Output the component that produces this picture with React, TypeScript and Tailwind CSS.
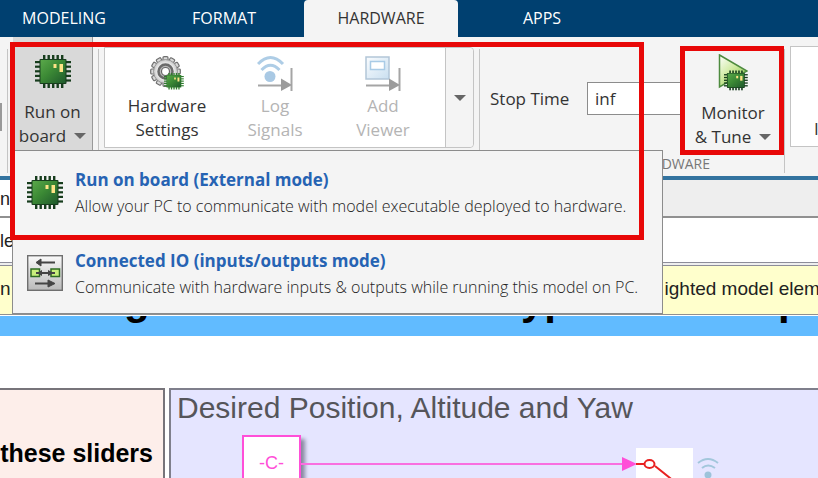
import type { ReactNode } from "react";
import clsx from "clsx";

const tabs = [
  { name: "MODELING", width: "mr-4 w-32" },
  { name: "FORMAT", width: "w-40" },
  { name: "HARDWARE", width: "w-[154px]" },
  { name: "APPS", width: "w-42" },
];

const pins = [0, 1, 2, 3, 4];

function ChipShape({ id, pin = "#173d1d" }: { id: string; pin?: string }) {
  return (
    <>
      <defs>
        <linearGradient id={id} x1="0" y1="0" x2="1" y2="1">
          <stop offset="0" stopColor="#5aa84a" />
          <stop offset="0.45" stopColor="#3c8a35" />
          <stop offset="1" stopColor="#1f5a2c" />
        </linearGradient>
      </defs>
      {pins.map((i) => (
        <g key={i} fill={pin}>
          <rect x={8 + i * 4.5} y="0" width="2.4" height="33" />
          <rect x="0" y={6 + i * 4.6} width="36" height="2.2" />
        </g>
      ))}
      <rect x="4.5" y="4" width="27" height="25" rx="1" fill={pin} />
      <rect x="5.5" y="5" width="25" height="23" fill={`url(#${id})`} />
      <rect x="18.5" y="9" width="3" height="4" fill="#ffe487" />
      <rect x="24.5" y="9" width="3.5" height="8" fill="#ffe487" />
    </>
  );
}

function ChipIcon({ id }: { id: string }) {
  return (
    <svg width="36" height="33" viewBox="0 0 36 33" aria-hidden="true">
      <ChipShape id={id} />
    </svg>
  );
}

function GearChipIcon() {
  const teeth = [0, 30, 60, 90, 120, 150, 180, 210, 240, 270, 300, 330];
  return (
    <svg width="34" height="34" viewBox="0 0 34 34" aria-hidden="true">
      <defs>
        <radialGradient id="gear">
          <stop offset="0.3" stopColor="#8a8a8a" />
          <stop offset="0.65" stopColor="#f0f0f0" />
          <stop offset="1" stopColor="#c5c5c5" />
        </radialGradient>
      </defs>
      {teeth.map((a) => (
        <rect
          key={a}
          x="13"
          y="0.7"
          width="5"
          height="5"
          rx="1"
          fill="#dadada"
          stroke="#707070"
          strokeWidth="1.2"
          transform={`rotate(${a} 15.5 15.5)`}
        />
      ))}
      <circle cx="15.5" cy="15.5" r="12" fill="url(#gear)" stroke="#888" strokeWidth="0.8" />
      <circle cx="15.5" cy="15.5" r="7" fill="#b9b9b9" stroke="#6a6a6a" strokeWidth="2.5" />
      <circle cx="15.5" cy="15.5" r="4" fill="#fff" stroke="#666" strokeWidth="1.2" />
      <g transform="translate(14 17) scale(0.55 0.5)">
        <ChipShape id="gearChip" pin="#2f7d2c" />
      </g>
    </svg>
  );
}

function LogIcon() {
  return (
    <svg width="36" height="36" viewBox="0 0 36 36" fill="none" aria-hidden="true">
      <path d="M1 8Q13.5 -5 26 8M4.500 14Q13.500 4.500 22.500 14" stroke="#aecde6" strokeWidth="3" />
      <circle cx="13" cy="20.500" r="5.500" fill="#a9c9e4" />
      <path d="M1 29.500H26M34.500 12V35" stroke="#a5a5a5" strokeWidth="2" />
      <path d="M24 22.500L35 29L24 35Z" fill="#9c9c9c" />
    </svg>
  );
}

function ViewerIcon() {
  return (
    <svg width="36" height="36" viewBox="0 0 36 36" fill="none" aria-hidden="true">
      <defs>
        <linearGradient id="screen" x1="0" y1="0" x2="1" y2="1">
          <stop offset="0" stopColor="#fafcfe" />
          <stop offset="1" stopColor="#c9dff0" />
        </linearGradient>
      </defs>
      <rect x="1" y="1" width="23" height="22" fill="url(#screen)" stroke="#b2c6d8" strokeWidth="1.500" />
      <rect x="5.500" y="5.500" width="14" height="8" fill="#fff" stroke="#a9cbe6" strokeWidth="1.500" />
      <path d="M1 29.500H26M34.500 12V35" stroke="#a5a5a5" strokeWidth="2" />
      <path d="M24 22.500L35 29L24 35Z" fill="#9c9c9c" />
    </svg>
  );
}

function MonitorIcon() {
  return (
    <svg width="30" height="37" viewBox="0 0 30 37" aria-hidden="true">
      <defs>
        <linearGradient id="play" x1="0" y1="0" x2="0.8" y2="1">
          <stop offset="0" stopColor="#ffffff" />
          <stop offset="0.5" stopColor="#cfeaa0" />
          <stop offset="1" stopColor="#7cc043" />
        </linearGradient>
      </defs>
      <path d="M1.500 1L29 17L1.500 33Z" fill="url(#play)" stroke="#4e8b3f" strokeWidth="1.500" />
      <g transform="translate(6 16.500) scale(0.660 0.600)">
        <ChipShape id="monitorChip" />
      </g>
    </svg>
  );
}

function ConnectedIcon() {
  return (
    <svg width="36" height="36" viewBox="0 0 36 36" aria-hidden="true">
      <defs>
        <linearGradient id="io" x1="0" y1="0" x2="0" y2="1">
          <stop offset="0" stopColor="#fafafa" />
          <stop offset="1" stopColor="#b9b9b9" />
        </linearGradient>
      </defs>
      <rect x="0.700" y="0.700" width="34.600" height="34.600" fill="url(#io)" stroke="#6f6f6f" strokeWidth="1.400" />
      <g stroke="#444" strokeWidth="1.800" fill="#444">
        <path d="M13 7.500H28M8 28.500H22" />
        <path d="M14 4L9 7.500L14 11ZM21 25L28 28.500L21 32Z" strokeWidth="1" />
      </g>
      <g fill="#c8ee7c" stroke="#2e6b22" strokeWidth="1.500">
        <rect x="4" y="14" width="8.500" height="7.500" />
        <rect x="24" y="14" width="8.500" height="7.500" />
      </g>
      <path d="M9 18H28" stroke="#444" strokeWidth="2" />
      <path d="M15 15L10 18L15 21ZM21 15L27 18L21 21Z" fill="#444" />
    </svg>
  );
}

function Caret() {
  return (
    <svg width="12" height="6" viewBox="0 0 12 6" aria-hidden="true">
      <path d="M0 0H12L6 6Z" fill="#666" />
    </svg>
  );
}

function Separator() {
  return <div className="mt-3 h-31 w-px shrink-0 bg-[#c4c4c4]" />;
}

function GalleryItem({ icon, top, bottom, disabled }: { icon: ReactNode; top: string; bottom: string; disabled?: boolean }) {
  return (
    <button
      type="button"
      disabled={disabled}
      className={clsx("flex w-27 flex-col items-center pt-2", disabled ? "text-[#b4b4b4]" : "text-[#333]")}
    >
      <span className="flex h-9 items-start justify-center">{icon}</span>
      <span className="pt-0.5 text-[17px] leading-6">
        {top}
        <br />
        {bottom}
      </span>
    </button>
  );
}

function MenuItem({ icon, title, text }: { icon: ReactNode; title: string; text: string }) {
  return (
    <button type="button" className="flex h-[81px] w-full items-start gap-3 pt-[15px] pl-3.5 text-left">
      <span className="flex h-13 items-center">{icon}</span>
      <span className="whitespace-nowrap">
        <span className="block text-[17px] leading-[27px] font-bold text-[#2663b3]">{title}</span>
        <span className="block text-[16px] leading-[27px] font-light text-[#222]">{text}</span>
      </span>
    </button>
  );
}

function Ribbon() {
  return (
    <div className="relative flex h-[139px] bg-[#f4f4f4]">
      <div className="mt-[66px] h-7 w-0.5 shrink-0 bg-[#999]" />
      <div className="w-[5px] shrink-0" />
      <Separator />
      <button
        type="button"
        className="ml-[5px] h-[113px] w-20 shrink-0 border-r border-[#999] bg-[#d9d9d9] pt-4 text-[17px] leading-6 text-[#333]"
      >
        <span className="flex justify-center pb-3">
          <ChipIcon id="runChip" />
        </span>
        Run on
        <br />
        <span className="flex items-center justify-center gap-2">
          board <Caret />
        </span>
      </button>
      <div className="w-[5px] shrink-0" />
      <Separator />
      <div className="mt-2.5 ml-[5px] flex h-[101px] shrink-0 rounded-r border border-[#c4c4c4] bg-white pl-2">
        <GalleryItem icon={<GearChipIcon />} top="Hardware" bottom="Settings" />
        <GalleryItem icon={<LogIcon />} top="Log" bottom="Signals" disabled />
        <GalleryItem icon={<ViewerIcon />} top="Add" bottom="Viewer" disabled />
        <button
          type="button"
          aria-label="More"
          className="ml-2 flex w-7 items-center justify-center rounded-r border-l border-[#c4c4c4] bg-[#f4f4f4]"
        >
          <Caret />
        </button>
      </div>
      <div className="w-[5px] shrink-0" />
      <Separator />
      <div className="flex w-[304px] shrink-0 flex-col">
        <div className="flex h-[116px]">
          <label htmlFor="stop-time" className="w-[107px] shrink-0 pt-[50px] pl-2.5 text-[17px] leading-6 text-[#333]">
            Stop Time
          </label>
          <input
            id="stop-time"
            defaultValue="inf"
            className="mt-[45px] h-[33px] w-[95px] shrink-0 border border-[#8c8c8c] bg-white px-[7px] text-[17px] text-[#333]"
          />
          <button type="button" className="w-[102px] pt-3.5 text-[17px] leading-6 text-[#333]">
            <span className="flex justify-center pb-2.5">
              <MonitorIcon />
            </span>
            Monitor
            <br />
            <span className="flex items-center justify-center gap-2 whitespace-nowrap">
              &amp; Tune <Caret />
            </span>
          </button>
        </div>
        <span className="pr-[74px] text-right text-[14px] leading-6 text-[#777]">HARDWARE</span>
      </div>
      <Separator />
      <div className="mt-[9px] ml-[5px] h-[101px] flex-1 overflow-hidden border border-r-0 border-[#c4c4c4] bg-white pt-[70px] pl-[23px] text-[17px] leading-6 text-[#333]">
        I
      </div>

      <div className="absolute top-[113px] left-3 z-10 w-[651px] border border-[#8c8c8c] bg-[#f4f4f4]">
        <MenuItem
          icon={<ChipIcon id="menuChip" />}
          title="Run on board (External mode)"
          text="Allow your PC to communicate with model executable deployed to hardware."
        />
        <MenuItem
          icon={<ConnectedIcon />}
          title="Connected IO (inputs/outputs mode)"
          text="Communicate with hardware inputs & outputs while running this model on PC."
        />
      </div>
      <div className="pointer-events-none absolute top-[5px] left-2.5 z-20 h-[198px] w-[634px] border-5 border-[#e80808]" />
      <div className="pointer-events-none absolute top-[9px] left-[680px] z-20 h-[109px] w-[104px] border-5 border-[#e80808]" />
    </div>
  );
}

function Canvas() {
  return (
    <div className="relative flex-1 overflow-hidden bg-white font-['Liberation_Sans',sans-serif]">
      <div className="relative mt-px h-5 overflow-hidden bg-[#61bbff] text-[42px] leading-[42px] font-bold text-black">
        <span className="absolute -top-[37px] left-[124px]">g</span>
        <span className="absolute -top-[37px] left-[521px]">yp</span>
        <span className="absolute -top-[37px] left-[778px]">p</span>
      </div>
      <div className="absolute top-[73px] left-0 h-full w-[165px] border-2 border-l-0 border-[#77747a] bg-[#fdeeea]">
        <p className="absolute top-12 right-2.5 text-[25px] leading-[30px] font-bold whitespace-nowrap text-black">these sliders</p>
      </div>
      <div className="absolute top-[73px] right-0 left-[169px] h-full border-2 border-r-0 border-[#7f7f8c] bg-[#e5e5ff]">
        <h2 className="pl-1.5 text-[30px] leading-9 whitespace-nowrap text-[#55555a]">Desired Position, Altitude and Yaw</h2>
        <div className="absolute top-[45px] left-[71px] h-15 w-[59px] border-2 border-[#ff4fd8] bg-white text-center text-[18px] leading-[52px] text-[#ff4fd8] shadow-[4px_4px_4px_#8888a0]">
          -C-
        </div>
        <svg className="absolute top-[58px] left-[130px]" width="430" height="50" viewBox="0 0 430 50" fill="none" aria-hidden="true">
          <path d="M0 16H323" stroke="#f96fe0" strokeWidth="2" />
          <path d="M321 9L336 16L321 23Z" fill="#ff4fd8" />
          <rect x="335" width="57" height="50" fill="#fff" />
          <path d="M335 16H343M354 18L374 34" stroke="#e82020" strokeWidth="2" />
          <ellipse cx="348.500" cy="16" rx="5" ry="4" stroke="#e82020" strokeWidth="2" />
          <path d="M397 15Q407 7 417 15M401 20Q407 15 414 20" stroke="#a3c7dc" strokeWidth="2" />
          <circle cx="407" cy="27" r="3.500" fill="#9dc3da" />
        </svg>
      </div>
    </div>
  );
}

export default function App() {
  return (
    <div className="flex h-screen flex-col overflow-hidden bg-white font-['Open_Sans',sans-serif]">
      <nav className="flex h-[37px] shrink-0 bg-[#004070] text-[16px] text-white">
        {tabs.map((tab) => (
          <button
            key={tab.name}
            type="button"
            className={clsx(
              "shrink-0 pb-0.5",
              tab.width,
              tab.name === "HARDWARE" && "rounded-t bg-[#f4f4f4] text-[#333]",
            )}
          >
            {tab.name}
          </button>
        ))}
      </nav>
      <Ribbon />
      <div className="shrink-0 font-['Liberation_Sans',sans-serif] text-[19px] text-[#222]">
        <div className="h-[42px] border-t-4 border-b-2 border-t-[#33739f] border-b-[#909090] bg-[#eeeeee]">
          <div className="h-9 w-20 bg-white text-[18px] leading-[38px]">nC</div>
        </div>
        <div className="h-[44px] bg-white text-[18px] leading-[46px]">le</div>
        <div className="h-1 border-y border-[#8d8d99] bg-[#eeeeee]" />
        <div className="flex h-[49px] items-center gap-[654px] border-b border-[#909090] bg-[#ffffcc] pb-0.5 whitespace-nowrap">
          <span>n</span>
          <span>ighted model elem</span>
        </div>
      </div>
      <Canvas />
    </div>
  );
}
